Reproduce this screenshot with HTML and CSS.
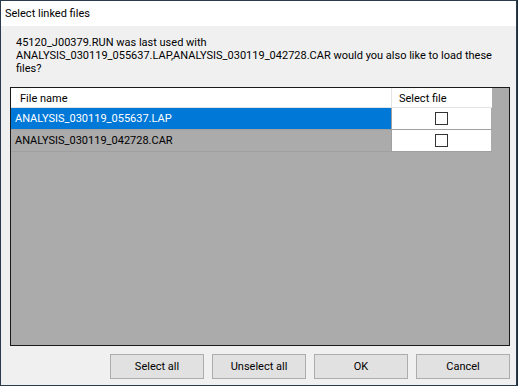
FILE: index.html
```html
<!DOCTYPE html>
<html lang="en">
<head>
  <meta charset="UTF-8" />
  <title>Select linked files</title>
  <link rel="stylesheet" href="styles.css">
</head>
<body>
  <div class="window">
    <div class="titlebar">Select linked files</div>
    <div class="content">
      <p class="message">45120_J00379.RUN was last used with<br>ANALYSIS_030119_055637.LAP,ANALYSIS_030119_042728.CAR would you also like to load these<br>files?</p>

      <div class="grid">
        <div class="row header">
          <div class="cell name">File name</div>
          <div class="cell pick">Select file</div>
        </div>
        <div class="row selected">
          <div class="cell name">ANALYSIS_030119_055637.LAP</div>
          <div class="cell pick"><span class="check"></span></div>
        </div>
        <div class="row">
          <div class="cell name">ANALYSIS_030119_042728.CAR</div>
          <div class="cell pick"><span class="check"></span></div>
        </div>
      </div>

      <div class="buttons">
        <button>Select all</button>
        <button>Unselect all</button>
        <button>OK</button>
        <button>Cancel</button>
      </div>
    </div>
  </div>
</body>
</html>
```

FILE: styles.css
```css
html, body {
  margin: 0;
  padding: 0;
}
body {
  width: 518px;
  height: 386px;
  background: #1f2e3d;
  font-family: Roboto, "Liberation Sans", Arial, sans-serif;
  font-size: 11px;
  color: #000;
  overflow: hidden;
}
.window {
  width: 515px;
  height: 384px;
  border: 1px solid #2b3b4c;
  background: #f0f0f0;
  display: flex;
  flex-direction: column;
}
.titlebar {
  height: 25px;
  line-height: 25px;
  padding-left: 4px;
  background: #fff;
  flex-shrink: 0;
  white-space: nowrap;
}
.content {
  padding: 10px 6px 0 9px;
  display: flex;
  flex-direction: column;
}
.message {
  margin: 0 0 12px 6px;
  line-height: 13px;
  white-space: nowrap;
}
.grid {
  height: 257px;
  border: 1px solid #1a1a1a;
  background: #ababab;
}
.row {
  display: flex;
  width: 481px;
  height: 21px;
  border-bottom: 1px solid #a0a0a0;
  white-space: nowrap;
}
.row .cell {
  line-height: 21px;
}
.row.header {
  height: 19px;
  border-bottom: 1px solid #e4e4e4;
  background: #fff;
}
.row.header .cell {
  padding-top: 2px;
  line-height: 17px;
}
.cell.name {
  width: 376px;
  padding-left: 4px;
}
.header .cell.name {
  width: 371px;
  padding-left: 9px;
}
.selected .cell.name {
  background: #0078d7;
  color: #fff;
}
.cell.pick {
  width: 99px;
  border-left: 1px solid #a0a0a0;
  background: #fff;
  display: flex;
  justify-content: center;
  align-items: center;
}
.header .cell.pick {
  width: 92px;
  padding-left: 7px;
  border-left: 1px solid #e4e4e4;
  justify-content: flex-start;
  align-items: flex-start;
}
.check {
  width: 11px;
  height: 11px;
  border: 1px solid #333;
  background: #fff;
}
.buttons {
  display: flex;
  justify-content: flex-end;
  gap: 8px;
  margin-top: 8px;
}
.buttons button {
  width: 94px;
  height: 25px;
  padding: 0;
  background: #e1e1e1;
  border: 1px solid #adadad;
  font-family: Roboto, "Liberation Sans", Arial, sans-serif;
  font-size: 11px;
  color: #000;
}
```
